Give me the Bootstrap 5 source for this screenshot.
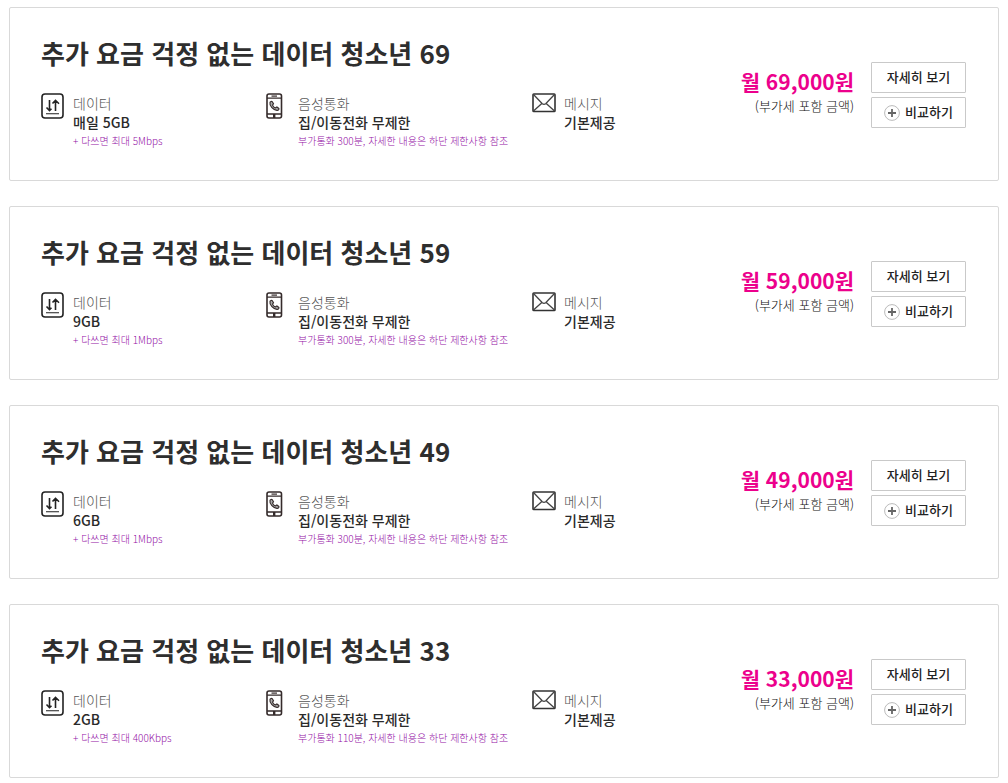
<!DOCTYPE html>
<html lang="ko">
<head>
<meta charset="utf-8">
<meta name="viewport" content="width=device-width, initial-scale=1">
<title>데이터 청소년 요금제</title>
<link href="https://cdn.jsdelivr.net/npm/bootstrap@5.3.0/dist/css/bootstrap.min.css" rel="stylesheet">
<style>
body{font-family:"Noto Sans CJK KR",sans-serif;color:#2a2a2a;background:#fff}
.plan-list{padding:7px 9px 4px;gap:25px}
.plan{border:1px solid #d9d9d9;border-radius:2px;padding:29px 32px 30px 31px}
.plan-name{font-size:26px;line-height:32px;font-weight:700;color:#2e2e2e}
.specs{margin-top:24px}
.spec{gap:8px}
.spec-data{flex:0 0 225px}
.spec-voice{flex:0 0 266px}
.spec-voice .spec-icon{margin-right:7px}
.spec-icon{flex:none}
.spec-label{font-size:14px;line-height:20px;color:#555;font-weight:300}
.spec-value{font-size:14px;line-height:19px;font-weight:500}
.spec-note{font-size:10px;line-height:18px;color:#9410a6;font-weight:300}
.price{font-size:21px;line-height:30px;font-weight:700;color:#ec008c}
.tax{font-size:13px;line-height:20px;font-weight:300;color:#111}
.side{gap:17px;margin-top:25px}
.price-box{padding-top:4px}
.actions{width:95px;gap:4px}
.plan-btn{--bs-btn-border-radius:1px;--bs-btn-font-size:13px;--bs-btn-line-height:21px;--bs-btn-font-weight:500;--bs-btn-color:#222;--bs-btn-border-color:#c9c9c9;--bs-btn-bg:#fff;--bs-btn-hover-border-color:#888;padding:3px 0 5px;gap:5px}
.plan-btn svg{position:relative;top:1px}
</style>
</head>
<body>
<svg class="d-none" aria-hidden="true">
  <symbol id="i-data" viewBox="0 0 24 27"><rect x="1" y="1" width="21" height="24" rx="3" fill="#fff" stroke="#222" stroke-width="1.6"/><path d="M8.5 7v10.500M5.500 14.500l3 3.200 2-2M14.500 18V8M11.500 10.500l3-3.200 3.500 3.500" fill="none" stroke="#222" stroke-width="1.6"/><path d="M5 20.700h13" stroke="#444" stroke-width="1.2"/></symbol>
  <symbol id="i-phone" viewBox="0 0 17 27"><rect x="1" y="1" width="14.500" height="24" rx="2" fill="#fff" stroke="#352b2b" stroke-width="1.6"/><path d="M1 5.200h14.500M1 21h14.500" stroke="#352b2b" stroke-width="1.300"/><path d="M5.500 3.100h5.500" stroke="#352b2b" stroke-width="1.200"/><path d="M8.200 21v4" stroke="#352b2b" stroke-width="2.400"/><path d="M4 9.300c-.9 3.500 3.500 8.300 7.200 8.100 1.300-.1 2.100-1.300 1.700-1.900l-2-1.500-1.600 1c-1.300-.5-2.300-1.600-2.800-2.900l1-1.300-1.300-2.100c-.6-.6-1.900-.2-2.200.6z" fill="#aaa" stroke="#352b2b" stroke-width="1.100"/></symbol>
  <symbol id="i-mail" viewBox="0 0 24 20"><rect x="1" y="1" width="22" height="17.500" rx=".8" fill="#fff" stroke="#333" stroke-width="1.600"/><path d="M1.500 1.500l8.800 9.300q1.700 1.200 3.400 0l8.800-9.300M1.500 18l8.300-7.500M22.500 18l-8.300-7.500" fill="none" stroke="#444" stroke-width="1.300"/></symbol>
  <symbol id="i-plus" viewBox="0 0 16 16"><circle cx="8" cy="8" r="7.400" fill="#fff" stroke="#bbb"/><path d="M4 8h8M8 4v8" stroke="#666" stroke-width="1.800"/></symbol>
</svg>
<main class="plan-list d-flex flex-column" id="plans"></main>
<template id="plan-template">
  <article class="plan d-flex justify-content-between align-items-start">
    <div>
      <h2 class="plan-name mb-0"></h2>
      <div class="specs d-flex">
        <div class="spec spec-data d-flex">
          <svg class="spec-icon" width="24" height="27" aria-hidden="true"><use href="#i-data"/></svg>
          <div><div class="spec-label">데이터</div><div class="spec-value" data-field="amount"></div><div class="spec-note" data-field="speed"></div></div>
        </div>
        <div class="spec spec-voice d-flex">
          <svg class="spec-icon" width="17" height="27" aria-hidden="true"><use href="#i-phone"/></svg>
          <div><div class="spec-label">음성통화</div><div class="spec-value">집/이동전화 무제한</div><div class="spec-note" data-field="voice"></div></div>
        </div>
        <div class="spec d-flex">
          <svg class="spec-icon" width="24" height="20" aria-hidden="true"><use href="#i-mail"/></svg>
          <div><div class="spec-label">메시지</div><div class="spec-value">기본제공</div></div>
        </div>
      </div>
    </div>
    <div class="side d-flex align-items-start">
      <div class="price-box text-end text-nowrap"><div class="price"></div><div class="tax">(부가세 포함 금액)</div></div>
      <div class="actions d-flex flex-column">
        <button type="button" class="btn plan-btn">자세히 보기</button>
        <button type="button" class="btn plan-btn d-flex align-items-center justify-content-center"><svg width="16" height="16" aria-hidden="true"><use href="#i-plus"/></svg>비교하기</button>
      </div>
    </div>
  </article>
</template>
<script src="https://cdn.jsdelivr.net/npm/bootstrap@5.3.0/dist/js/bootstrap.bundle.min.js"></script>
<script>
const plans = [
  {tier: 69, amount: '매일 5GB', speed: '5Mbps', voice: 300},
  {tier: 59, amount: '9GB', speed: '1Mbps', voice: 300},
  {tier: 49, amount: '6GB', speed: '1Mbps', voice: 300},
  {tier: 33, amount: '2GB', speed: '400Kbps', voice: 110}
];
for (const p of plans) {
  const card = document.getElementById('plan-template').content.cloneNode(true);
  const put = (sel, text) => { card.querySelector(sel).textContent = text; };
  put('.plan-name', `추가 요금 걱정 없는 데이터 청소년 ${p.tier}`);
  put('[data-field=amount]', p.amount);
  put('[data-field=speed]', `+ 다쓰면 최대 ${p.speed}`);
  put('[data-field=voice]', `부가통화 ${p.voice}분, 자세한 내용은 하단 제한사항 참조`);
  put('.price', `월 ${p.tier},000원`);
  document.getElementById('plans').append(card);
}
</script>
</body>
</html>
